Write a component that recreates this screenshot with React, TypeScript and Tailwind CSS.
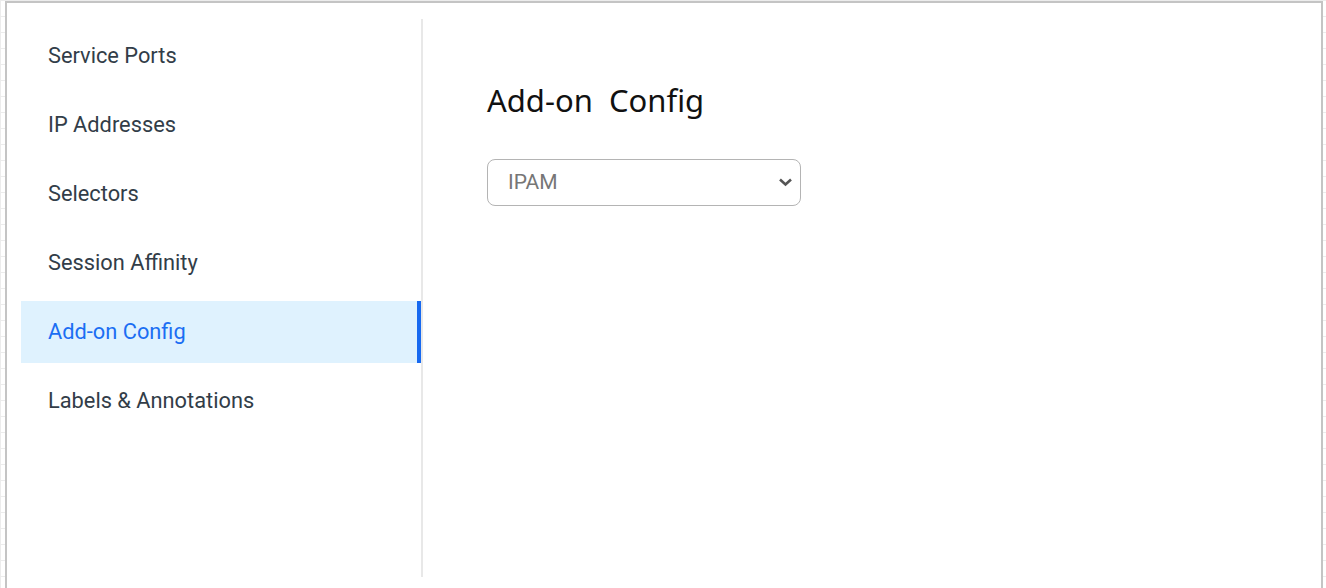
const items = [
  "Service Ports",
  "IP Addresses",
  "Selectors",
  "Session Affinity",
  "Add-on Config",
  "Labels & Annotations",
];

const App = () => {
  const active = "Add-on Config";

  return (
    <div className="h-[588px] w-[1326px] overflow-hidden bg-white bg-[linear-gradient(#ececec_1px,transparent_1px),linear-gradient(90deg,#ececec_1px,transparent_1px)] bg-[size:16px_16px] pl-[5px] pt-[1px] pr-[3px]">
      <div className="flex h-[600px] border-2 border-[#c4c4c4] bg-white pl-[14px] pt-[16px]">
        <nav className="flex h-[558px] w-[402px] shrink-0 flex-col gap-[7px] border-r-2 border-[#e8e8e8] pt-[6px] font-['Roboto',sans-serif]">
          {items.map((item) => (
            <div
              key={item}
              className={
                item === active
                  ? "flex h-[62px] w-[400px] items-center border-r-4 border-[#1769f0] bg-[#dff2fe] pl-[27px] text-[21.8px] text-[#1b6ef3]"
                  : "flex h-[62px] w-[400px] items-center pl-[27px] text-[21.8px] text-[#323d48]"
              }
            >
              {item}
            </div>
          ))}
        </nav>
        <section className="flex flex-col pl-[64px] pt-[61px]">
          <h1 className="font-['Noto_Sans',sans-serif] text-[31px] leading-[40px] text-[#111]">
            Add-on&nbsp; Config
          </h1>
          <div className="relative mt-[39px] h-[47px] w-[314px]">
            <select
              defaultValue="IPAM"
              className="h-full w-full appearance-none rounded-[8px] border border-[#b4b4b4] bg-white pl-[20px] font-['Roboto',sans-serif] text-[21px] text-[#767676] outline-none"
            >
              <option>IPAM</option>
            </select>
            <svg
              className="pointer-events-none absolute right-[8px] top-[18px]"
              width="15"
              height="10"
              viewBox="0 0 15 10"
            >
              <path d="M2 2.5 L7.5 7.5 L13 2.5" fill="none" stroke="#555" strokeWidth="2.6" />
            </svg>
          </div>
        </section>
      </div>
    </div>
  );
};

export default App;
